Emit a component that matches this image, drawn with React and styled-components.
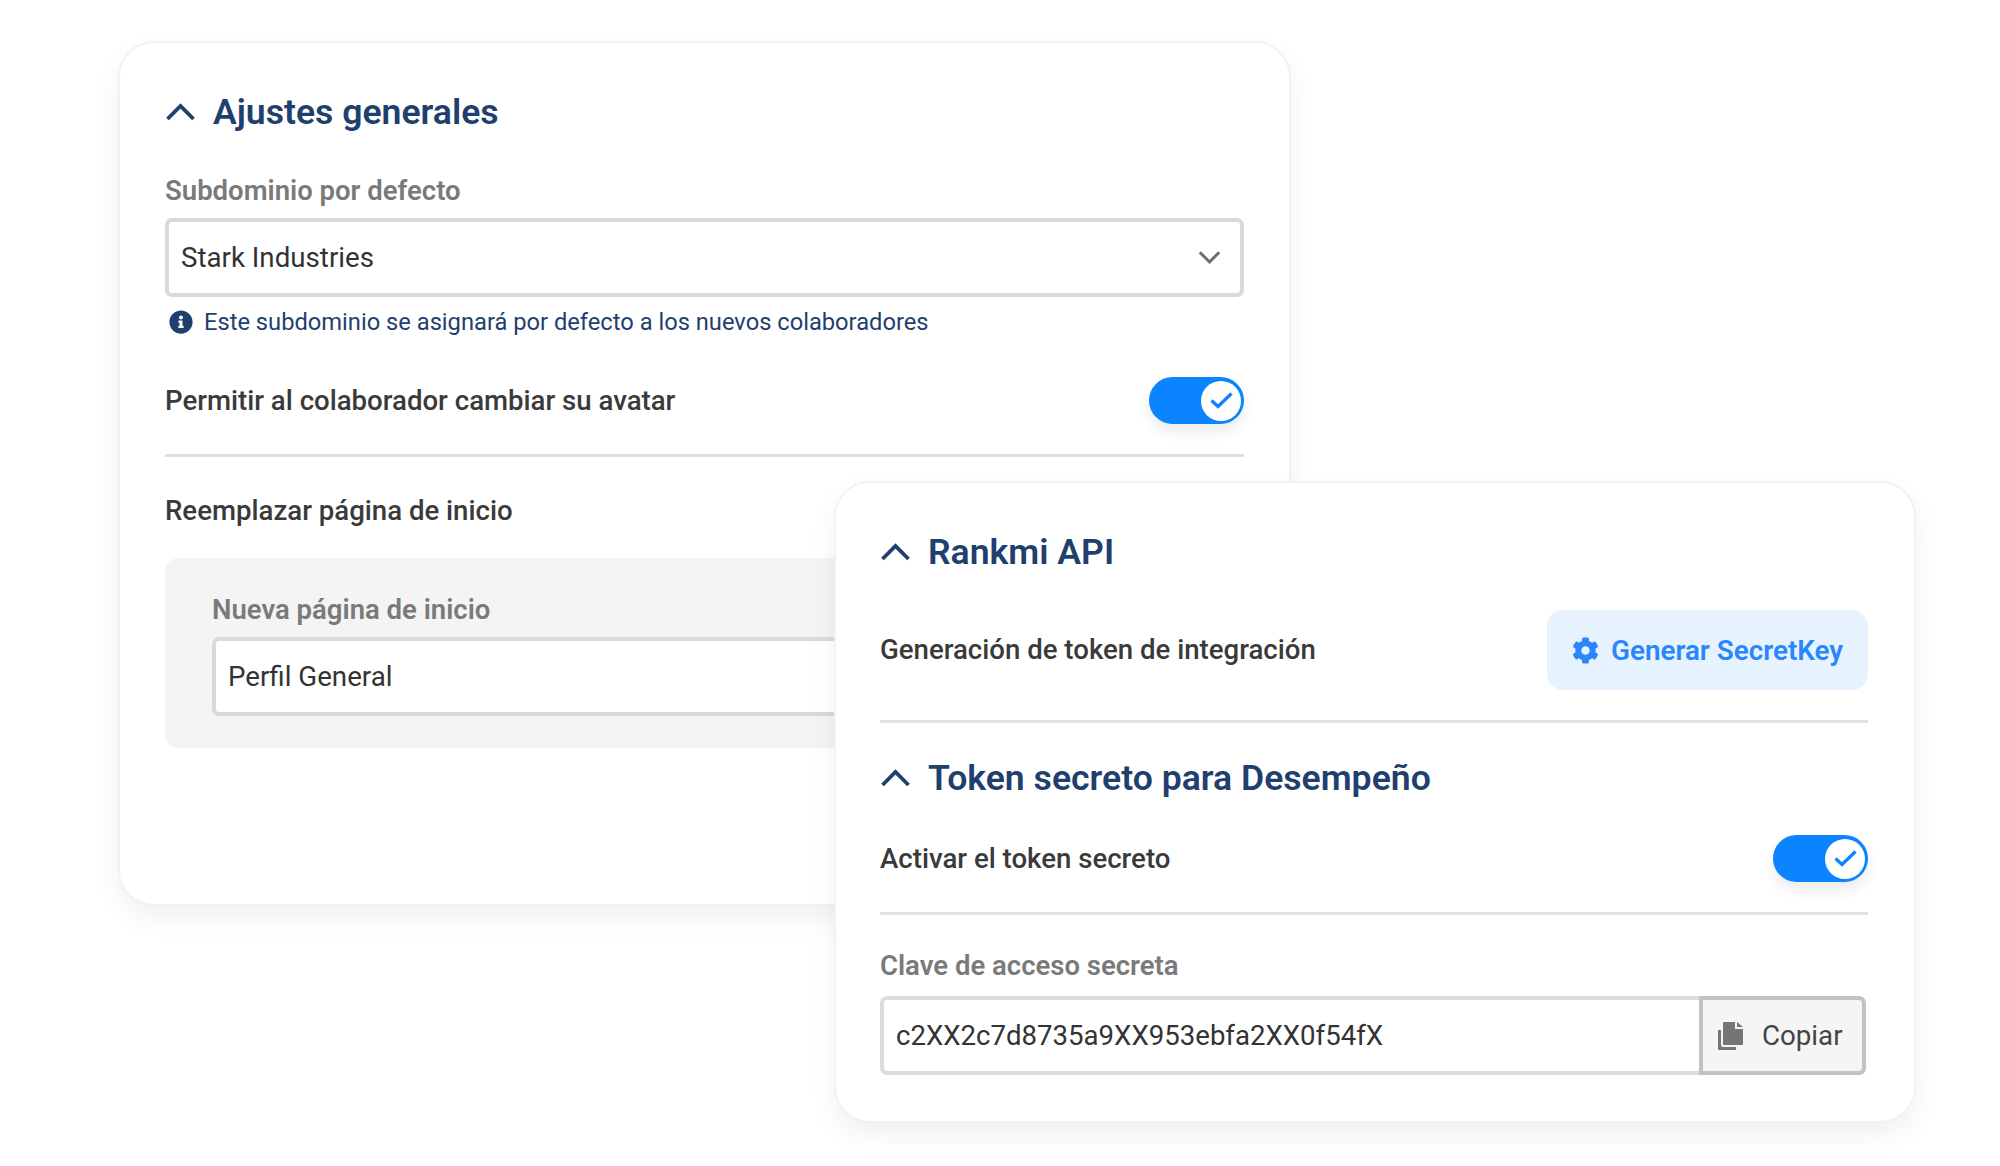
import styled, { createGlobalStyle } from "styled-components";
import { FaCog, FaInfoCircle } from "react-icons/fa";

const GlobalStyle = createGlobalStyle`
  html, body {
    margin: 0;
    background: #fff;
  }
  body {
    font-family: Roboto, "Liberation Sans", sans-serif;
    color: #333;
  }
  * {
    box-sizing: border-box;
  }
`;

const Stage = styled.div`
  position: relative;
  width: 2000px;
  height: 1166px;
  padding: 41px 0 0 118px;
  overflow: hidden;
`;

const Card = styled.section`
  background: #fff;
  border: 2px solid #f2f2f2;
  border-radius: 36px;
  box-shadow: 0 12px 28px rgba(0, 0, 0, 0.06);
`;

const GeneralCard = styled(Card)`
  width: 1173px;
  height: 865px;
  padding: 0 45px;
`;

const ApiCard = styled(Card)`
  position: absolute;
  left: 834px;
  top: 481px;
  width: 1082px;
  height: 642px;
  padding: 0 46px 0 44px;
`;

const SectionHeader = styled.header`
  display: flex;
  align-items: center;
  gap: 17px;
  height: ${(p) => p.$height}px;
  padding-top: ${(p) => p.$top}px;
  color: #1f3f6e;
`;

const Title = styled.h2`
  margin: 0;
  font-size: 35.6px;
  font-weight: 600;
  line-height: 44px;
  color: #1f3f6e;
`;

const Label = styled.label`
  display: block;
  margin-top: ${(p) => p.$top || 0}px;
  font-size: 27.5px;
  font-weight: 600;
  line-height: 32px;
  color: #7a7a7a;
`;

const Field = styled.div`
  display: flex;
  align-items: center;
  justify-content: space-between;
  height: 79px;
  padding: 0 18px 0 12px;
  margin-top: ${(p) => p.$top || 0}px;
  background: #fff;
  border: 4px solid #d9d9d9;
  border-radius: 7px;
  font-size: 27.7px;
  color: #333;
`;

const Hint = styled.p`
  display: flex;
  align-items: center;
  gap: 11px;
  margin: 10px 0 0 4px;
  height: 30px;
  font-size: 23.7px;
  line-height: 30px;
  color: #1f3f6e;
`;

const Row = styled.div`
  display: flex;
  align-items: center;
  justify-content: space-between;
  height: ${(p) => p.$height}px;
  margin-top: ${(p) => p.$top || 0}px;
`;

const RowLabel = styled.span`
  font-size: 27.6px;
  font-weight: 500;
  line-height: 32px;
  color: #3a3a3a;
`;

const Divider = styled.hr`
  margin: ${(p) => p.$top || 0}px 0 0;
  border: 0;
  height: 3px;
  background: #e0e0e0;
`;

const Track = styled.div`
  display: flex;
  align-items: center;
  justify-content: flex-end;
  width: 95px;
  height: 47px;
  padding-right: 3px;
  border-radius: 24px;
  background: #0a84ff;
  box-shadow: 0 8px 14px rgba(0, 0, 0, 0.08);
`;

const Knob = styled.div`
  display: flex;
  align-items: center;
  justify-content: center;
  width: 40px;
  height: 40px;
  border-radius: 50%;
  background: #fff;
`;

const Panel = styled.div`
  height: 190px;
  margin-top: 27px;
  padding: 35px 47px 0;
  background: #f4f4f4;
  border-radius: 14px;
`;

const ActionButton = styled.button`
  display: flex;
  align-items: center;
  gap: 12px;
  width: 321px;
  height: 80px;
  padding: 0 0 0 25px;
  border: 0;
  border-radius: 16px;
  background: #e6f3ff;
  color: #2a86fb;
  font-family: inherit;
  font-size: 27.8px;
  font-weight: 600;
`;

const CopyGroup = styled.div`
  display: flex;
  margin-top: 14px;
  width: 986px;
  height: 79px;
`;

const SecretValue = styled.div`
  flex: 1;
  display: flex;
  align-items: center;
  padding-left: 12px;
  border: 4px solid #dcdcdc;
  border-right: 0;
  border-radius: 7px 0 0 7px;
  font-size: 27.6px;
  color: #333;
`;

const CopyButton = styled.button`
  display: flex;
  align-items: center;
  gap: 19px;
  width: 167px;
  padding: 0 0 0 15px;
  border: 4px solid #c2c2c2;
  border-radius: 0 7px 7px 0;
  background: #f5f5f5;
  color: #444;
  font-family: inherit;
  font-size: 27.7px;
`;

const Chevron = ({ down }) => (
  <svg
    width={down ? 25 : 31}
    height={down ? 15 : 20}
    viewBox="0 0 30 20"
    fill="none"
    stroke={down ? "#6f6f6f" : "currentColor"}
    strokeWidth={down ? 4 : 3.8}
  >
    <path d={down ? "M2 3 15 16 28 3" : "M2 17 15 4 28 17"} />
  </svg>
);

const CopyIcon = () => (
  <svg width="25" height="28" viewBox="0 0 25 28" fill="#757575">
    <path d="M6 0h11v7h8v15a1 1 0 0 1-1 1H6a1 1 0 0 1-1-1V1a1 1 0 0 1 1-1z" />
    <path d="M19 0l6 5h-6z" />
    <path d="M0 8h3v15a2 2 0 0 0 2 2h13v3H1a1 1 0 0 1-1-1z" />
  </svg>
);

const Switch = () => (
  <Track>
    <Knob>
      <svg width="23" height="17" viewBox="0 0 23 17" fill="none" stroke="#0a84ff" strokeWidth="3.2">
        <path d="M1.5 8.5 8 14.5 21.5 1.5" />
      </svg>
    </Knob>
  </Track>
);

export default function App() {
  return (
    <Stage>
      <GlobalStyle />
      <GeneralCard>
        <SectionHeader $height={131} $top={7}>
          <Chevron />
          <Title>Ajustes generales</Title>
        </SectionHeader>
        <Label $top={1}>Subdominio por defecto</Label>
        <Field $top={11}>
          Stark Industries
          <Chevron down />
        </Field>
        <Hint>
          <FaInfoCircle size={24} />
          Este subdominio se asignará por defecto a los nuevos colaboradores
        </Hint>
        <Row $height={47} $top={40}>
          <RowLabel>Permitir al colaborador cambiar su avatar</RowLabel>
          <Switch />
        </Row>
        <Divider $top={30} />
        <Row $height={40} $top={34}>
          <RowLabel>Reemplazar página de inicio</RowLabel>
        </Row>
        <Panel>
          <Label $top={1}>Nueva página de inicio</Label>
          <Field $top={11}>Perfil General</Field>
        </Panel>
      </GeneralCard>

      <ApiCard>
        <SectionHeader $height={107} $top={30}>
          <Chevron />
          <Title>Rankmi API</Title>
        </SectionHeader>
        <Row $height={80} $top={20}>
          <RowLabel>Generación de token de integración</RowLabel>
          <ActionButton>
            <FaCog size={27} />
            Generar SecretKey
          </ActionButton>
        </Row>
        <Divider $top={30} />
        <SectionHeader $height={82} $top={27}>
          <Chevron />
          <Title>Token secreto para Desempeño</Title>
        </SectionHeader>
        <Row $height={47} $top={30}>
          <RowLabel>Activar el token secreto</RowLabel>
          <Switch />
        </Row>
        <Divider $top={30} />
        <Label $top={35}>Clave de acceso secreta</Label>
        <CopyGroup>
          <SecretValue>c2XX2c7d8735a9XX953ebfa2XX0f54fX</SecretValue>
          <CopyButton>
            <CopyIcon />
            Copiar
          </CopyButton>
        </CopyGroup>
      </ApiCard>
    </Stage>
  );
}
